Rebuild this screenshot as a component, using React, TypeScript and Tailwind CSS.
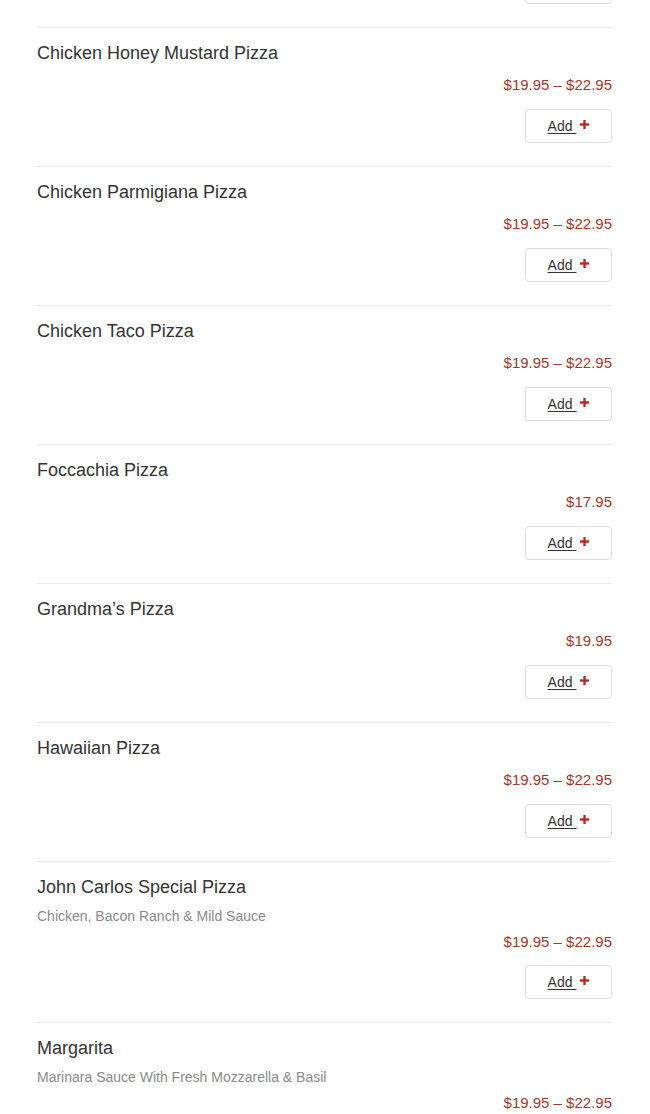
type Item = {
  name: string;
  desc?: string;
  price: string;
};

const items: Item[] = [
  { name: "Chicken Bacon Ranch Pizza", price: "$19.95 – $22.95" },
  { name: "Chicken Honey Mustard Pizza", price: "$19.95 – $22.95" },
  { name: "Chicken Parmigiana Pizza", price: "$19.95 – $22.95" },
  { name: "Chicken Taco Pizza", price: "$19.95 – $22.95" },
  { name: "Foccachia Pizza", price: "$17.95" },
  { name: "Grandma’s Pizza", price: "$19.95" },
  { name: "Hawaiian Pizza", price: "$19.95 – $22.95" },
  {
    name: "John Carlos Special Pizza",
    desc: "Chicken, Bacon Ranch & Mild Sauce",
    price: "$19.95 – $22.95",
  },
  {
    name: "Margarita",
    desc: "Marinara Sauce With Fresh Mozzarella & Basil",
    price: "$19.95 – $22.95",
  },
];

const PlusIcon = () => (
  <svg width="9" height="9" viewBox="0 0 10 10" className="inline-block -mt-[3px]">
    <rect x="3.7" y="0" width="2.6" height="10" fill="#b8261f" />
    <rect x="0" y="3.7" width="10" height="2.6" fill="#b8261f" />
  </svg>
);

const MenuItem = ({ item }: { item: Item }) => (
  <div className="border-t border-[#ebebeb] pt-[14px] pb-[23px]">
    <h3 className="text-[18px] leading-[22px] text-[#333333]">{item.name}</h3>
    {item.desc && (
      <p className="mt-[8px] text-[14px] leading-[20px] text-[#8a8a8a]">{item.desc}</p>
    )}
    <div
      className={`${item.desc ? "mt-[6px]" : "mt-[11px]"} text-right text-[15px] leading-[20px] text-[#a0392c]`}
    >
      {item.price}
    </div>
    <div className={`${item.desc ? "mt-[13px]" : "mt-[14px]"} flex justify-end`}>
      <button className="flex h-[34px] w-[87px] items-center justify-center gap-[4px] rounded-[4px] border border-[#dcdcdc] bg-white text-[14px] text-[#333333]">
        <span className="underline underline-offset-[2px]">Add&nbsp;</span>
        <PlusIcon />
      </button>
    </div>
  </div>
);

export default function App() {
  return (
    <div
      className="h-[1114px] overflow-hidden bg-white"
      style={{ fontFamily: '"Liberation Sans", Arial, sans-serif' }}
    >
      <div className="-mt-[112px] pl-[37px] pr-[38px]">
        {items.map((item) => (
          <MenuItem key={item.name} item={item} />
        ))}
      </div>
    </div>
  );
}
